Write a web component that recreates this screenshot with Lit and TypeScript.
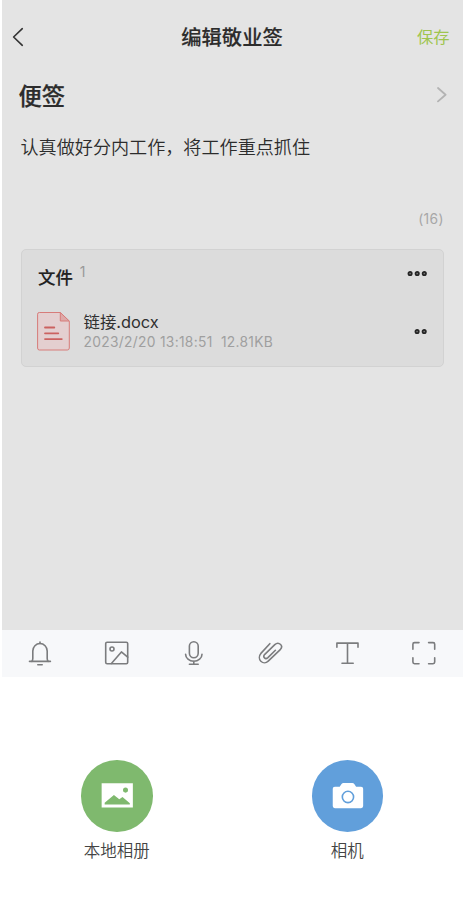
import { LitElement, html, css, svg } from "lit";
import { customElement, property } from "lit/decorators.js";

const glyphs = {
  bell: svg`<path d="M4.8 22.3Q5.8 21.5 5.8 19.5V12a7.2 7.5 0 0 1 14.4 0V19.5Q20.2 21.5 21.2 22.3"/><path d="M2.5 22.4H23.4M13 4.5V3M10.8 25.7H15.2"/>`,
  image: svg`<rect x="1.7" y="3.2" width="22" height="21.5" rx="1.4"/><circle cx="8" cy="10" r="2"/><path d="M7.4 24.4L17.4 12.9 23.7 18.2"/>`,
  mic: svg`<rect x="8.4" y="2.7" width="8.8" height="16" rx="4.4"/><path d="M4.6 15.2a8.2 7 0 0 0 16.4 0M12.8 22V25.2M8.4 25.2H17.2"/>`,
  clip: svg`<path d="M12.8 4.7L3.9 14.4C1.9 16.7 1.9 20.1 3.9 22.2 6 24.3 9 24.3 11.2 22.2L23 10.9C24.9 9 25 6.9 23.6 5.5 22 4 19.5 4.1 17.8 5.7L7.8 15.3C6.6 16.6 6.6 18 7.5 18.9 8.4 19.8 9.8 19.6 10.9 18.6L18.4 11.3"/>`,
  text: svg`<path d="M2.9 8.2V4.1H24V8.2M13.5 4.1V24.3M8 24.3H19.2"/>`,
  scan: svg`<path d="M1.9 10.2V5.2Q1.9 3.6 3.5 3.6H8M17.6 3.6H22.1Q23.7 3.6 23.7 5.2V10.2M23.7 18.8V23.1Q23.7 24.7 22.1 24.7H17.6M8 24.7H3.5Q1.9 24.7 1.9 23.1V18.8"/>`,
};
type GlyphName = keyof typeof glyphs;

@customElement("tool-button")
class ToolButton extends LitElement {
  @property() icon: GlyphName = "bell";
  static styles = css`
    :host { flex: 1; display: flex; justify-content: center; align-items: center; }
    svg { display: block; width: 27px; height: 29px; fill: none; stroke: #7b7c7e; stroke-width: 1.6; stroke-linecap: round; stroke-linejoin: round; }
  `;
  render() {
    return html`<svg viewBox="0 0 27 29">${glyphs[this.icon]}</svg>`;
  }
}

@customElement("app-root")
class AppRoot extends LitElement {
  static styles = css`
    :host {
      display: flex; flex-direction: column; box-sizing: border-box;
      height: 922px; padding-left: 2px; background: #fff; overflow: hidden;
      font-family: Inter, "Noto Sans CJK SC", sans-serif; color: #2c2c2c;
    }
    * { box-sizing: border-box; }
    svg { display: block; flex: none; }
    .note { height: 630px; background: #e4e4e4; }
    .header { height: 74px; display: grid; grid-template-columns: 80px 1fr 80px; align-items: center; padding: 0 13px 0 10px; }
    .line { fill: none; stroke-width: 1.6; stroke-linecap: round; stroke-linejoin: round; }
    .back { stroke: #333; }
    .next { stroke: #b3b3b3; stroke-width: 1.8; }
    .title { font-size: 20.3px; line-height: 30px; font-weight: 500; text-align: center; white-space: nowrap; padding: 2px 0 0 2px; -webkit-text-stroke: .15px; }
    .save { font-size: 16.3px; line-height: 24px; color: #9fc54f; text-align: right; font-weight: 400; padding-right: .5px; }
    .category { height: 42px; display: flex; align-items: center; justify-content: space-between; padding: 0 16px 0 16.5px; }
    .name { font-size: 23.3px; line-height: 34px; font-weight: 500; padding-top: 3px; -webkit-text-stroke: .25px; }
    .body { height: 62px; padding: 18px 0 0 18.5px; font-size: 18.1px; line-height: 27px; font-weight: 350; }
    .count { height: 71px; padding: 31px 19px 0 0; text-align: right; font-size: 13.8px; line-height: 20px; letter-spacing: .4px; color: #a7a7a7; }
    .files { height: 118px; margin: 0 19px; border: 1px solid #d2d2d2; border-radius: 5px; background: #dcdcdc; }
    .files-head { height: 55px; padding: 0 15px 0 16px; display: flex; }
    .label { font-size: 17.4px; line-height: 26px; font-weight: 500; margin-top: 15px; color: #222; -webkit-text-stroke: .15px; }
    .sup { font-size: 14px; line-height: 18px; margin: 13px 0 0 7px; color: #999; }
    .dots { fill: #777; stroke: #252525; stroke-width: 1.7; }
    .files-head .dots { margin: 20px 0 0 auto; }
    .file { display: flex; padding: 0 15px 0 15px; }
    .doc { margin-top: 6px; margin-left: -.5px; }
    .meta { margin-left: 13px; padding-top: 6px; flex: 1; white-space: nowrap; }
    .filename { font-size: 16.4px; line-height: 22px; color: #303030; }
    .detail { font-size: 13.8px; line-height: 16px; letter-spacing: .3px; color: #9f9f9f; white-space: pre; padding-top: 1px; }
    .file .dots { margin-top: 23px; }
    .tools { height: 47px; display: flex; background: #f7f8fa; }
    .sources { flex: 1; display: flex; padding-top: 83px; }
    .source { flex: 1; display: flex; flex-direction: column; align-items: center; font-size: 16.5px; line-height: 24px; color: #444; gap: 8px; padding-right: 1px; font-weight: 350; }
    .disc { width: 71.5px; height: 71.5px; border-radius: 50%; margin-bottom: -.5px; }
    .album { background: #7fb96e; }
    .camera { background: #619fdb; }
  `;

  dots(count: number) {
    return html`<svg class="dots" width=${count * 7} height="7" viewBox="0 0 ${count * 7} 7">
      ${Array.from({ length: count }, (_, i) => svg`<circle cx=${3.1 + i * 7.1} cy="3.5" r="1.7"/>`)}
    </svg>`;
  }

  render() {
    return html`
      <div class="note">
        <div class="header">
          <svg class="line back" width="14" height="20" viewBox="0 0 14 20"><path d="M10.3 1.7L1.6 10 10.3 18.3"/></svg>
          <div class="title">编辑敬业签</div>
          <div class="save">保存</div>
        </div>
        <div class="category">
          <div class="name">便签</div>
          <svg class="line next" width="10" height="16" viewBox="0 0 10 16"><path d="M1 1L8.6 7.7 1 14.4"/></svg>
        </div>
        <div class="body">认真做好分内工作，将工作重点抓住</div>
        <div class="count">(16)</div>
        <div class="files">
          <div class="files-head">
            <div class="label">文件</div><div class="sup">1</div>
            ${this.dots(3)}
          </div>
          <div class="file">
            <svg class="doc" width="34" height="40" viewBox="0 0 34 40" fill="none" stroke="#d77c7a" stroke-linejoin="round">
              <path d="M2.3 1.5H23.3L32.3 10.5V37Q32.3 39 30.3 39H2.3Q.6 39 .6 37V3.2Q.6 1.5 2.3 1.5z" fill="#e4cfd0"/>
              <path d="M23.3 1.5V10H32.3z" fill="#dea9a8"/>
              <path d="M8 16.5H17.3M8 22.3H21.3M8 28.1H24.8" stroke="#cb6260" stroke-width="1.8" stroke-linecap="round"/>
            </svg>
            <div class="meta">
              <div class="filename">链接.docx</div>
              <div class="detail">2023/2/20 13:18:51  12.81KB</div>
            </div>
            ${this.dots(2)}
          </div>
        </div>
      </div>
      <div class="tools">
        ${(Object.keys(glyphs) as GlyphName[]).map((name) => html`<tool-button .icon=${name}></tool-button>`)}
      </div>
      <div class="sources">
        <div class="source">
          <svg class="disc album" viewBox="0 0 71 71">
            <path d="M20.5 23.2H51.5V47.2H20.5z" fill="#fff"/>
            <circle cx="44.2" cy="29.9" r="2.5" fill="#7fb96e"/>
            <path d="M23.5 44.2V42.5L32.7 34.7 38 39 41.2 36.8 48.5 43V44.2z" fill="#7fb96e"/>
          </svg>
          <div>本地相册</div>
        </div>
        <div class="source">
          <svg class="disc camera" viewBox="0 0 71 71">
            <path d="M22.7 26.5H27.5L29.3 23.8Q30 22.9 31.3 22.9H40Q41.3 22.9 42 23.8L43.8 26.5H48.7Q50.8 26.5 50.8 28.6V45.7Q50.8 47.8 48.7 47.8H22.7Q20.6 47.8 20.6 45.7V28.6Q20.6 26.5 22.7 26.5z" fill="#fff"/>
            <circle cx="35.7" cy="36.7" r="5.6" fill="none" stroke="#619fdb" stroke-width="1.6"/>
          </svg>
          <div>相机</div>
        </div>
      </div>
    `;
  }
}
